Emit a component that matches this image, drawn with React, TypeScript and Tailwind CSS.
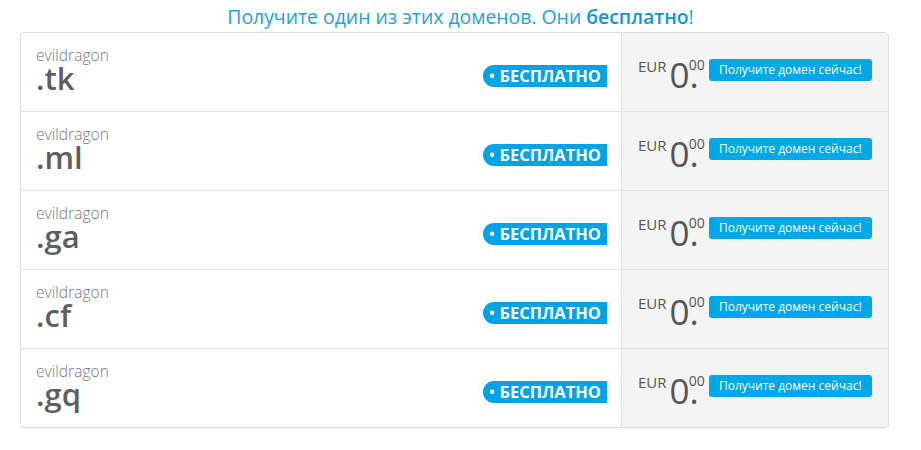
import React from "react";

const domains = [".tk", ".ml", ".ga", ".cf", ".gq"];

export default function App() {
  return (
    <div className="w-[921px] h-[450px] bg-white" style={{ fontFamily: '"Open Sans", sans-serif' }}>
      <div className="pt-[4px] text-center text-[19.4px] leading-[26px] text-[#1aa3dd]">
        Получите один из этих доменов. Они <span className="font-semibold text-[#0b97d5]">бесплатно</span>!
      </div>
      <div className="ml-[20px] mt-[2px] w-[869px] border border-[#dcdcdc] rounded-[4px] overflow-hidden shadow-[0_1px_1px_rgba(0,0,0,0.05)]">
        {domains.map((d, i) => (
          <div key={d} className={i > 0 ? "flex h-[79px] border-t border-[#e3e3e3]" : "flex h-[78px]"}>
            <div className="w-[601px] flex items-start justify-between pl-[15px] pr-[14px] border-r border-[#e3e3e3]">
              <div className="pt-[13px]">
                <div className="text-[15.6px] leading-[18px] font-light text-[#777]">evildragon</div>
                <div className="text-[31px] leading-[30px] font-semibold text-[#5f5f5f] -mt-[1px]">{d}</div>
              </div>
              <div className="mt-[32px] h-[22px] flex items-center bg-[#00a3e6] text-white font-bold text-[16.5px] leading-none rounded-l-full rounded-r-[3px] pl-[6px] pr-[6px]">
                <span className="text-[14px] mr-[5px]">•</span>БЕСПЛАТНО
              </div>
            </div>
            <div className="flex-1 bg-[#f4f4f4] flex items-start pl-[16px] pt-[27px]">
              <span className="text-[15px] leading-none text-[#555] -mt-[1px]">EUR</span>
              <span className="ml-[3px] text-[35px] leading-[32px] text-[#555] -mt-[1px]">0<span>.</span></span>
              <span className="-ml-[10px] text-[14px] leading-none text-[#555] -mt-[2px]">00</span>
              <button className="ml-[4px] -mt-[1px] h-[22px] w-[163px] rounded-[3px] bg-[#00a8e8] text-white text-[12px] leading-none">
                Получите домен сейчас!
              </button>
            </div>
          </div>
        ))}
      </div>
    </div>
  );
}
